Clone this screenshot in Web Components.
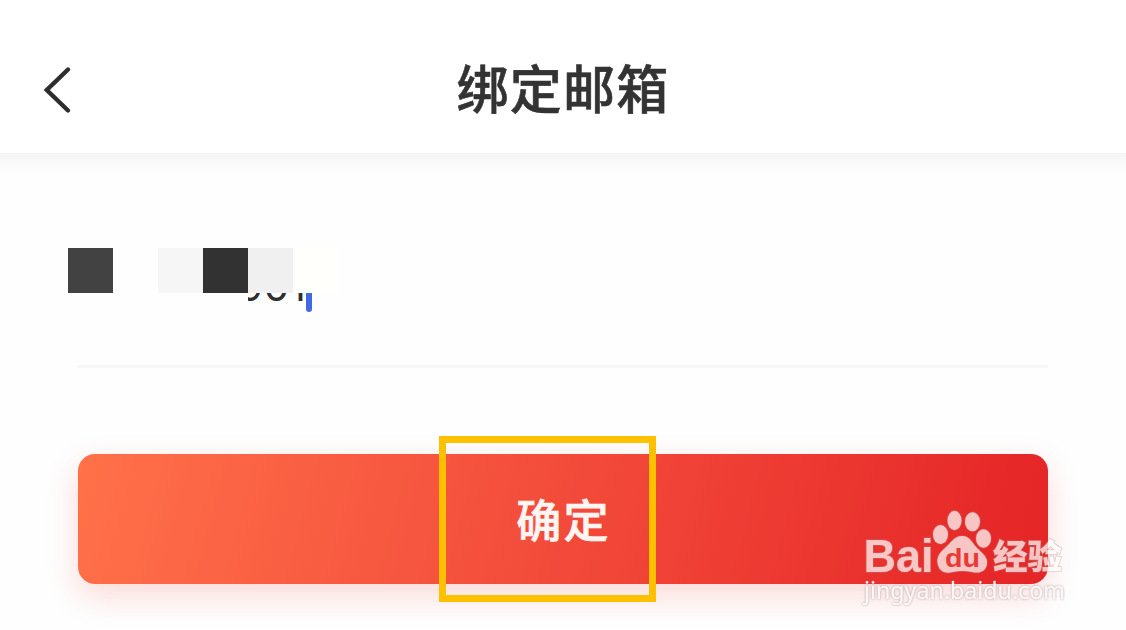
<!DOCTYPE html>
<html lang="zh-CN">
<head>
<meta charset="utf-8">
<title>绑定邮箱</title>
<style>
body { margin: 0; background: #fefefe; overflow: hidden; font-family: "Noto Sans CJK SC", sans-serif; }
</style>
</head>
<body>
<bind-page></bind-page>
<script>
const define = (name, html) => customElements.define(name, class extends HTMLElement {
  constructor() {
    super();
    const t = document.createElement('template');
    t.innerHTML = html;
    this.attachShadow({ mode: 'open' }).append(t.content.cloneNode(true));
  }
});

define('title-bar', `
<style>
:host { display: grid; grid-template-columns: 114px 1fr 114px; align-items: center; height: 153px; box-sizing: border-box; padding-top: 26px; background: #fff; box-shadow: 0 -14px 24px 20px rgba(0,0,0,.055); }
svg { display: block; margin-left: 40px; }
h1 { margin: -5px 0 0; text-align: center; font-size: 52px; line-height: 76px; font-weight: 500; letter-spacing: 1.2px; color: #333; -webkit-text-stroke: .6px #333; white-space: nowrap; }
</style>
<svg width="34" height="50" viewBox="0 0 34 50" fill="none" stroke="#2e2e2e" stroke-width="4.4" stroke-linecap="round"><path d="M28 4.5 6.8 25 28 45.500"/></svg>
<h1><slot></slot></h1>`);

define('email-field', `
<style>
:host { display: block; position: relative; height: 100px; border-bottom: 3px solid #f6f6f6; }
.value { display: flex; padding-left: 161px; align-items: flex-start; font: 41px/50px Inter, sans-serif; color: #303030; }
.text { display: flex; justify-content: flex-end; margin-top: -4px; width: 67px; white-space: nowrap; clip-path: inset(0 -10px 0 9px); }
.caret { width: 6px; height: 47px; border-radius: 3px; background: #4169e1; }
slot[name=mask] { display: block; }
</style>
<div class="value"><span class="text"><slot></slot></span><span class="caret"></span></div>
<slot name="mask"></slot>`);

define('mosaic-mask', `
<style>
:host { position: absolute; left: -10px; top: -17px; display: grid; grid-template-columns: repeat(6, 45px); height: 45px; }
i:nth-child(2) { background: #424242; }
i:nth-child(3) { background: #fefefe; }
i:nth-child(4) { background: #f6f6f6; }
i:nth-child(5) { background: #323232; }
i:nth-child(6) { background: #f0f0f0; }
i:nth-child(7) { background: #fffffc; }
</style><i></i><i></i><i></i><i></i><i></i><i></i>`);

define('submit-button', `
<style>
:host { display: block; position: relative; }
button { display: block; width: 100%; height: 130px; border: 0; padding: 0 0 2px 1px; border-radius: 17px; background: linear-gradient(105deg, #ff7149 0%, #f5533e 39%, #ef4035 64%, #e62828 94%, #e42627 100%); box-shadow: 0 12px 32px rgba(235,50,40,.18); color: #fff5f2; font: 500 45px/1 "Noto Sans CJK SC", sans-serif; letter-spacing: 2.200px; -webkit-text-stroke: .7px #fff5f2; }
.mark { position: absolute; left: 361px; top: -18px; width: 217px; height: 166px; box-sizing: border-box; border: 7px solid #ffc000; }
</style>
<button><slot></slot></button><div class="mark"></div>`);

define('water-mark', `
<style>
:host { position: absolute; left: 854px; top: 500px; }
svg { display: block; }
.logo { opacity: .73; }
.brand { font-family: "Liberation Sans", sans-serif; font-weight: 700; }
.cn { font-family: "Noto Sans CJK SC", sans-serif; font-weight: 900; }
.url { font-family: "Noto Sans", sans-serif; filter: drop-shadow(0 0 1px rgba(120,90,90,.6)); }
.logo > * { paint-order: stroke; }
</style>
<svg width="230" height="120" viewBox="0 0 230 120">
<g class="logo" fill="#fff" stroke="#b98884" stroke-opacity=".55" stroke-width="1.6">
<text class="brand" x="9.500" y="71.500" font-size="45.500" textLength="70" lengthAdjust="spacingAndGlyphs">Bai</text>
<ellipse cx="86.500" cy="34.500" rx="7.500" ry="9.500"/>
<ellipse cx="100.500" cy="20.500" rx="7" ry="9.700"/>
<ellipse cx="118.500" cy="21.700" rx="7.500" ry="9.500"/>
<ellipse cx="129.500" cy="38.500" rx="7.500" ry="9.200"/>
<path d="M108 36C100 36 97 43 91 48C85 53 82 58 84 65C86 72 92 74 99 72Q108 70 118 72C126 74 132 71 133 64C134 57 128 53 123 48C117 42 116 36 108 36Z"/>
<text class="cn" x="139" y="69" font-size="34.500" textLength="69" lengthAdjust="spacingAndGlyphs">经验</text>
</g>
<text class="brand" x="91" y="67" font-size="26" fill="#e83a36" textLength="35" lengthAdjust="spacingAndGlyphs">du</text>
<text class="url" x="10" y="99" font-size="23.500" fill="#fff" fill-opacity=".88" stroke="#fff" stroke-opacity=".5" stroke-width=".4" textLength="201" lengthAdjust="spacingAndGlyphs">jingyan.baidu.com</text>
</svg>`);

define('bind-page', `
<style>
:host { display: block; position: relative; width: 1126px; height: 630px; overflow: hidden; }
main { display: flex; flex-direction: column; gap: 86px; padding: 112px 78px 0; }
</style>
<title-bar>绑定邮箱</title-bar>
<main>
<email-field>901<mosaic-mask slot="mask"></mosaic-mask></email-field>
<submit-button>确定</submit-button>
</main>
<water-mark></water-mark>`);
</script>
</body>
</html>
